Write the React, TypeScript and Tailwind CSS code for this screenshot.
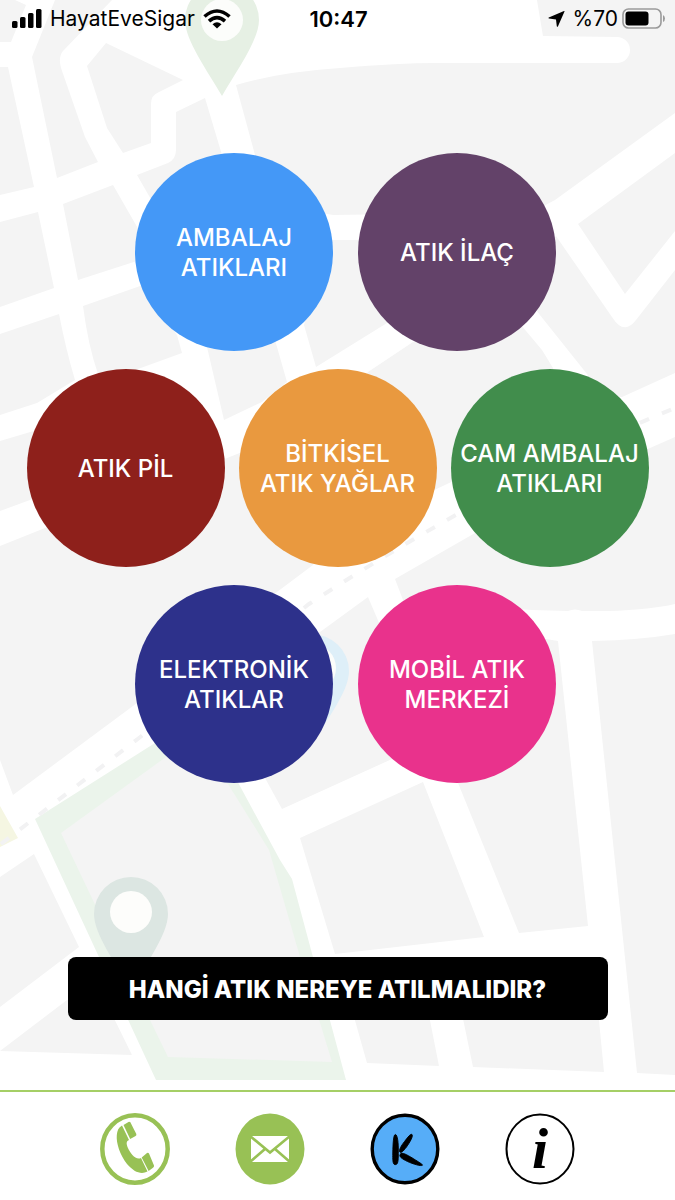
type WasteType = {
  lines: string[];
  color: string;
};

const topRow: WasteType[] = [
  { lines: ["AMBALAJ", "ATIKLARI"], color: "bg-[#4498f7]" },
  { lines: ["ATIK İLAÇ"], color: "bg-[#634269]" },
];

const middleRow: WasteType[] = [
  { lines: ["ATIK PİL"], color: "bg-[#8e201b]" },
  { lines: ["BİTKİSEL", "ATIK YAĞLAR"], color: "bg-[#e9993f]" },
  { lines: ["CAM AMBALAJ", "ATIKLARI"], color: "bg-[#418d4c]" },
];

const bottomRow: WasteType[] = [
  { lines: ["ELEKTRONİK", "ATIKLAR"], color: "bg-[#2d318b]" },
  { lines: ["MOBİL ATIK", "MERKEZİ"], color: "bg-[#e9328c]" },
];

// city blocks, the white left between them makes the streets
const blocks = [
  "M0 0H15L26 5L11 42H0Z",
  "M0 67H8L34 187L0 195Z",
  "M55 0H112L63 51Q58 57 61 68L85 137L98 162L57 178L32 57Z",
  "M106 43L183 80L159 92Q151 95 151 104V143L123 153L107 128L87 66Z",
  "M205 98L222 155L234 251L160 215L137 175L168 163Q176 159 176 150V112Z",
  "M236 85Q280 72 340 68Q400 63 435 63H617A13 13 0 0 0 617 37L543 36L537 0H675V113L555 200L458 251L400 214L333 215L250 200L255 155Z",
  "M675 153L578 224L625 294L675 231Z",
  "M675 270L636 320Q624 336 612 317L556 236L520 290L587 374L600 395L622 397L675 373Z",
  "M0 222L38 212L54 288L0 307Z",
  "M63 204L113 185L140 232V260L78 280Z",
  "M0 334L59 314Q66 350 75 380L37 403L0 415Z",
  "M83 306L143 285L177 335L182 353L127 373L98 374Q88 345 83 306Z",
  "M207 347L224 420L262 402L287 382L275 340Z",
  "M304 325L316 367L387 323L430 300L380 240H325Z",
  "M368 372L413 342L500 300L542 350L553 368L560 400L540 440L428 493L400 480L350 400Z",
  "M0 441L37 430L80 470L30 500L0 511Z",
  "M0 546L60 522L222 460L260 445L330 530L313 565L277 592L137 703L13 795L0 760Z",
  "M675 437L650 448Q560 484 475 533L395 579L403 600L458 684L500 608L532 610L568 611Q575 608 582 611Q640 612 675 604Z",
  "M320 632L368 597L380 625L420 745L392 759L282 809L265 778L234 684Z",
  "M300 838L423 782L484 937L335 954Z",
  "M458 783L519 933L588 926L558 641L540 638L458 684Z",
  "M592 641Q640 640 675 634V1075L637 1073Z",
  "M345 985L367 1063L439 1066L424 990Z",
  "M456 985L473 1067L604 1072L597 1000Z",
  "M0 877L34 854L79 947L0 1007Z",
  "M0 1051L67 1000H105L132 1055Z",
];

const CityMap = () => (
  <svg
    className="absolute inset-0 h-full w-full"
    viewBox="0 0 675 1090"
    preserveAspectRatio="xMidYMid slice"
    aria-hidden="true"
  >
    <path d={blocks.join("")} fill="#f4f4f4" />
    <path d="M0 806L18 838L0 847Z" fill="#f5f6e2" />
    <path d="M35 819L155 743L234 775L280 860L292 879L346 1080H156Z" fill="#ebf4eb" />
    <path d="M61 833L166 757L228 784L269 850L300 957L332 1062L168 1057L150 1020Z" fill="#f4f4f4" />
    <path
      d="M1 844L139 738L309 604Q500 480 675 408"
      fill="none"
      stroke="#f2f2f3"
      strokeWidth="4"
      strokeDasharray="10 14"
    />
    <path d="M222 96C207 70 185 40 185 20A37 37 0 0 1 259 20C259 40 237 70 222 96Z" fill="#e6f0e4" />
    <circle cx="222" cy="20" r="21" fill="#fcfdfb" />
    <path d="M311 746C296 720 273 692 273 671A38 37 0 0 1 349 671C349 692 326 720 311 746Z" fill="#deeff8" />
    <circle cx="312" cy="668" r="24" fill="#fcfdfb" />
    <path d="M131 990C116 964 94 934 94 914A37 37 0 0 1 168 914C168 934 146 964 131 990Z" fill="#dce6e2" />
    <circle cx="131" cy="912" r="21" fill="#fdfdfb" />
  </svg>
);

const StatusBar = () => (
  <header className="relative grid h-9 grid-cols-3 items-center pt-px pr-2.5 pl-3 text-[21px] leading-7 text-black">
    <div className="flex items-center gap-2">
      <svg className="h-5 w-[30px] shrink-0" viewBox="0 0 30 20" aria-hidden="true">
        <rect x="0" y="12" width="5.500" height="7" rx="1.5" />
        <rect x="8" y="8" width="5.500" height="11" rx="1.5" />
        <rect x="16" y="4" width="5.500" height="15" rx="1.5" />
        <rect x="24" y="0" width="5.500" height="19" rx="1.5" />
      </svg>
      <span>HayatEveSigar</span>
      <svg className="h-5 w-7 shrink-0" viewBox="0 0 28 20" aria-hidden="true">
        <g fill="none" stroke="#000" strokeWidth="3.6">
          <path d="M1.500 7.500Q14-3.500 26.500 7.500" />
          <path d="M6 12.200Q14 5 22 12.200" />
        </g>
        <path d="M9.500 15.200Q14 11.500 18.500 15.200L14 19.500Z" />
      </svg>
    </div>
    <time className="text-center text-[22px] font-semibold">10:47</time>
    <div className="flex items-center justify-end gap-1">
      <svg className="mr-1 h-4 w-[17px]" viewBox="0 0 17 16" aria-hidden="true">
        <path d="M16.500 0.500Q17 0 16 0L0.800 6.400Q0 7 1 7.400L8 8.400L8.800 15.300Q9.400 16.300 10 15.300Z" />
      </svg>
      <span>%70</span>
      <svg className="h-[22px] w-[43px]" viewBox="0 0 43 22" aria-hidden="true">
        <rect x="1" y="1" width="38" height="19" rx="5.500" fill="none" stroke="#9a9a9a" strokeWidth="1.600" />
        <rect x="3.500" y="3.500" width="23" height="14" rx="3" />
        <path d="M41 7Q43 8 43 10.500Q43 13 41 14Z" fill="#9a9a9a" />
      </svg>
    </div>
  </header>
);

const WasteButton = ({ waste }: { waste: WasteType }) => (
  <button
    type="button"
    className={`flex size-[198px] shrink-0 cursor-pointer flex-col items-center justify-center rounded-full pt-0.5 text-2xl leading-[30px] font-medium whitespace-nowrap text-white ${waste.color}`}
  >
    {waste.lines.map((line) => (
      <span key={line}>{line}</span>
    ))}
  </button>
);

const PhoneIcon = () => (
  <svg className="h-[72px] w-[70px]" viewBox="0 0 70 72" aria-hidden="true">
    <ellipse cx="35" cy="36" rx="32.700" ry="33.700" fill="#fff" stroke="#98c155" strokeWidth="4.500" />
    <g fill="#98c155" transform="translate(0 -2)">
      <path d="M22 14.500L29 29C26.500 30 26 32 27.500 36C30.500 43 36 49.500 41 47L47.500 60.500C41 64 34 61 27 53C20 44 16 32 16.800 24C17.200 19.500 18.500 16.500 22 14.500Z" />
      <path d="M23.500 14L28.500 11Q29.700 10.500 30.500 11.600L36.300 23Q36.700 24.300 35.600 25L30.200 28Z" />
      <path d="M41.700 46.500L47 42Q48.200 41.300 49 42.500L54 54.500Q54.300 56 53 56.800L48.600 60Z" />
    </g>
  </svg>
);

const MailIcon = () => (
  <svg className="h-[72px] w-[70px]" viewBox="0 0 70 72" aria-hidden="true">
    <ellipse cx="35" cy="36" rx="34.500" ry="35.500" fill="#98c155" />
    <rect x="16" y="23" width="38" height="26" fill="#fff" />
    <path
      d="M15 23L35 39.500L55 23M15 49L30 36M55 49L40 36"
      fill="none"
      stroke="#98c155"
      strokeWidth="2.600"
    />
  </svg>
);

const KIcon = () => (
  <svg className="h-[72px] w-[70px]" viewBox="0 0 70 72" aria-hidden="true">
    <ellipse cx="35" cy="36" rx="32.800" ry="33.800" fill="#56adf8" stroke="#000" strokeWidth="3.400" />
    <g stroke="#000" strokeWidth="0.900">
      <path d="M25.500 21.500C27.500 22 28.500 30 28.300 38C28.300 45 28.500 51 26 51.500C22.700 52.500 22.700 48 22.800 40C23 30 23.500 21 25.500 21.500Z" />
      <path d="M42 21.500C43.500 23 40 29 36.500 34C33 38.500 31 40.500 29.800 39C28.800 37 31 33 34.500 28.500C38 24 40.500 20.500 42 21.500Z" />
      <path d="M30 41.500C32 38.500 37 42 42 44.800C47 48 53 51.500 52.500 52.200C51 53.500 43 51 37.500 48.500C32.500 46 29 44 30 41.500Z" />
    </g>
  </svg>
);

const InfoIcon = () => (
  <svg className="h-[72px] w-[70px]" viewBox="0 0 70 72" aria-hidden="true">
    <ellipse cx="35" cy="36" rx="33.500" ry="34.500" fill="#fff" stroke="#000" strokeWidth="2" />
    <text
      x="35"
      y="55"
      textAnchor="middle"
      className="font-['Liberation_Serif',serif] text-[58px] font-bold italic"
    >
      i
    </text>
  </svg>
);

const links = [
  { label: "Telefon", href: "#telefon", Icon: PhoneIcon },
  { label: "E-posta", href: "#eposta", Icon: MailIcon },
  { label: "Belediye", href: "#belediye", Icon: KIcon },
  { label: "Bilgi", href: "#bilgi", Icon: InfoIcon },
];

const App = () => {
  return (
    <div className="flex min-h-screen flex-col bg-white font-[Inter,sans-serif]">
      <div className="relative flex grow flex-col overflow-hidden">
        <CityMap />
        <StatusBar />
        <main className="relative flex grow flex-col items-center pt-[117px] pb-[70px]">
          <div className="flex flex-col items-center gap-[18px]">
            <div className="flex gap-[25px] pl-4">
              {topRow.map((waste) => (
                <WasteButton key={waste.color} waste={waste} />
              ))}
            </div>
            <div className="flex gap-[14px]">
              {middleRow.map((waste) => (
                <WasteButton key={waste.color} waste={waste} />
              ))}
            </div>
            <div className="flex gap-[25px] pl-4">
              {bottomRow.map((waste) => (
                <WasteButton key={waste.color} waste={waste} />
              ))}
            </div>
          </div>
          <button
            type="button"
            className="mt-auto h-[63px] w-4/5 cursor-pointer rounded-lg bg-black pt-0.5 text-2xl font-extrabold text-white"
          >
            HANGİ ATIK NEREYE ATILMALIDIR?
          </button>
        </main>
      </div>
      <nav className="flex h-[110px] justify-center border-t-2 border-[#a5cf66] bg-white">
        <div className="grid w-4/5 grid-cols-4 items-center pt-1.5">
          {links.map(({ label, href, Icon }) => (
            <a key={label} href={href} aria-label={label} className="flex justify-center">
              <Icon />
            </a>
          ))}
        </div>
      </nav>
    </div>
  );
};

export default App;
